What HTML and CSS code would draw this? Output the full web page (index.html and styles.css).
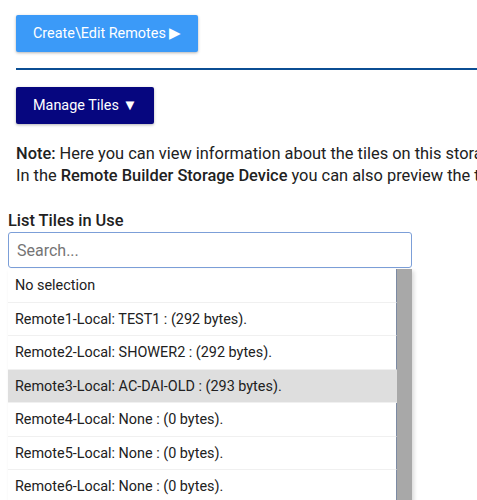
FILE: index.html
```html
<!DOCTYPE html>
<html>
<head>
    <meta charset="UTF-8">
    <title>Remote Builder - Tiles</title>
    <link rel="stylesheet" href="styles.css">
</head>
<body>

    <div class="page">
        <div class="section">
            <button class="btn btn-light">Create\Edit Remotes <span class="arrow">&#9654;</span></button>
            <div class="rule"></div>
            <button class="btn btn-dark">Manage Tiles <span class="arrow">&#9660;</span></button>
            <p class="note">
                <b>Note:</b> Here you can view information about the tiles on this storage device.<br>
                In the <b>Remote Builder Storage Device</b> you can also preview the tiles in use.
            </p>
        </div>

        <label class="field-label">List Tiles in Use</label>
        <div class="picker">
            <input class="search" type="text" placeholder="Search..." autofocus>
            <div class="dropdown">
                <div class="options">
                    <div class="option">No selection</div>
                    <div class="option">Remote1-Local: TEST1 : (292 bytes).</div>
                    <div class="option">Remote2-Local: SHOWER2 : (292 bytes).</div>
                    <div class="option active">Remote3-Local: AC-DAI-OLD : (293 bytes).</div>
                    <div class="option">Remote4-Local: None : (0 bytes).</div>
                    <div class="option">Remote5-Local: None : (0 bytes).</div>
                    <div class="option">Remote6-Local: None : (0 bytes).</div>
                    <div class="option">Remote7-Local: None : (0 bytes).</div>
                </div>
                <div class="scrollbar"></div>
            </div>
        </div>
    </div>

</body>
</html>
```

FILE: styles.css
```css
html, body {
    margin: 0;
    overflow: hidden;
}

body {
    font-family: Roboto, "Liberation Sans", sans-serif;
    color: #212121;
    background-color: white;
}

.page {
    width: 700px;
    padding: 0 8px;
}

.section {
    padding: 15px 8px 0;
}

.btn {
    display: block;
    border: none;
    border-radius: 2px;
    color: white;
    font-family: Roboto, "Liberation Sans", sans-serif;
    font-size: 14.4px;
    line-height: 19px;
    padding: 9px 17px;
    box-shadow: 0 1px 3px rgba(0, 0, 0, 0.3);
}

.arrow {
    font-size: 15px;
}

.btn-light {
    background-color: #3b9af8;
}

.btn-dark {
    background-color: #06067f;
    margin-top: 17px;
}

.rule {
    height: 2px;
    background-color: #0b4e93;
    margin-top: 16px;
}

.note {
    font-size: 16.4px;
    line-height: 22px;
    margin: 19px 0 0;
    white-space: nowrap;
}

.note b {
    font-weight: 500;
}

.field-label {
    display: block;
    font-size: 16.4px;
    font-weight: 500;
    line-height: 20px;
    margin-top: 24px;
    margin-bottom: 1px;
}

.picker {
    width: 404px;
}

.search {
    display: block;
    box-sizing: border-box;
    width: 404px;
    height: 36px;
    border: 1px solid #7c9fd8;
    border-radius: 3px;
    padding: 0 8px;
    font-family: Roboto, "Liberation Sans", sans-serif;
    font-size: 16px;
    color: #212121;
    outline: none;
}

.search::placeholder {
    color: #757575;
}

.dropdown {
    display: flex;
    margin-top: 1px;
    box-shadow: 2px 2px 4px rgba(0, 0, 0, 0.15);
}

.options {
    flex: 1;
}

.option {
    font-size: 14.4px;
    line-height: 16.5px;
    padding: 9px 7px 7px;
    border-bottom: 1px solid #f0f0f0;
    border-right: 1px solid #7c8aa3;
}

.option.active {
    background-color: #dedede;
    border-right-color: #dedede;
}

.scrollbar {
    width: 15px;
    background-color: #a8a8a8;
}
```
